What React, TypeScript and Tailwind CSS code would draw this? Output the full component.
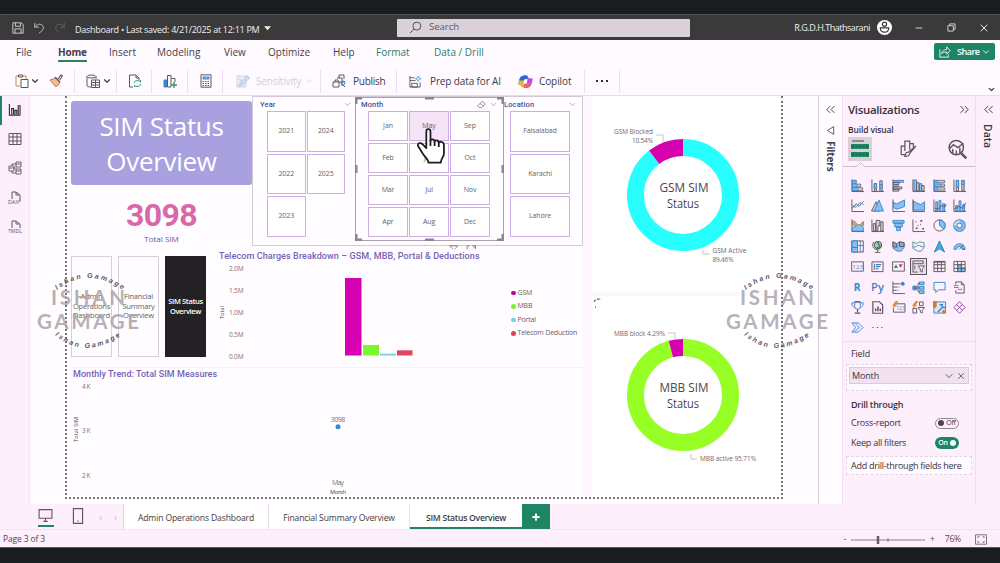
import type { ReactNode } from "react";
import { ChevronDown, ChevronsLeft, ChevronsRight, Minus, Plus, X } from "lucide-react";

const MENU = [
    { label: "File", className: "w-[42px]" },
    { label: "Home", className: "w-[51px]", active: true },
    { label: "Insert", className: "w-[48px]" },
    { label: "Modeling", className: "w-[67px]" },
    { label: "View", className: "w-[44px]" },
    { label: "Optimize", className: "w-[65px]" },
    { label: "Help", className: "w-[43px]" },
    { label: "Format", className: "w-[58px] text-[#2c8063]" },
    { label: "Data / Drill", className: "w-[70px] text-[#2c8063]" },
];

const YEARS = ["2021", "2024", "2022", "2025", "2023"];
const MONTHS = ["Jan", "May", "Sep", "Feb", "Jun", "Oct", "Mar", "Jul", "Nov", "Apr", "Aug", "Dec"];
const LOCATIONS = ["Faisalabad", "Karachi", "Lahore"];

const LEGEND = [
    { label: "GSM", color: "bg-[#b9009b]" },
    { label: "MBB", color: "bg-[#76f52e]" },
    { label: "Portal", color: "bg-[#6fd3e6]" },
    { label: "Telecom Deduction", color: "bg-[#d8405f]" },
];

const K = "#5d5560";
const B = "#3c86c8";
const L = "#86bff0";

// Small glyphs share a 14 x 14 box
function Glyph({ children, className = "size-[14px]" }: { children: ReactNode; className?: string }) {
    return (
        <svg viewBox="0 0 14 14" className={`shrink-0 overflow-visible ${className}`} fill="none" stroke={K} strokeWidth="1">
            {children}
        </svg>
    );
}

const axis = <path d="M1 .5v13h13" />;

const VISUALS: ReactNode[] = [
    // stacked and clustered bars
    <>{axis}<path d="M1.500 1.500h4v3h-4zM1.500 5.500h9v3h-9zM1.500 9.500h11v3h-11z" fill="#d8d0dc" strokeWidth=".8" /><path d="M1.500 1.500h4v3h-4zM1.500 5.500h5v3h-5zM1.500 9.500h6v3h-6z" fill={L} stroke={B} strokeWidth=".8" /></>,
    <>{axis}<path d="M3.500 5h2.500v8H3.500zM9.500 2h2.500v11H9.500z" fill="#d8d0dc" /><path d="M3.500 5h2.500v5H3.500zM9.500 6h2.500v4H9.500z" fill={L} stroke={B} /></>,
    <><path d="M1 .5v13" /><path d="M1.500 1.500h11v2h-11zM1.500 6h5v2h-5z" fill={L} stroke={B} /><path d="M1.500 3.800h6v2h-6zM1.500 8.500h9v2h-9zM1.500 11h6v2h-6z" fill="#d8d0dc" /></>,
    <><path d="M1 .5v13h13" /><path d="M2 1h3v12H2zM8 5h2.500v8H8z" fill={L} stroke={B} /><path d="M5 4h2.500v9H5zM10.500 7H13v6h-2.500z" fill="#d8d0dc" /></>,
    <>{axis}<path d="M1.500 1.500h11v2.500h-11zM1.500 5.500h11V8h-11zM1.500 9.500h11V12h-11z" fill="#d8d0dc" strokeWidth=".8" /><path d="M1.500 1.500h3.500v2.500H1.500zM1.500 5.500h7V8h-7zM1.500 9.500H5V12H1.500z" fill={L} stroke={B} strokeWidth=".8" /></>,
    <>{axis}<path d="M3.500 1.500H6V13H3.500zM9.500 1.500H12V13H9.500z" fill="#d8d0dc" /><path d="M3.500 1.500H6V9H3.500zM9.500 1.500H12V6H9.500z" fill={L} stroke={B} /></>,
    // lines and areas
    <>{axis}<path d="m1.500 10 4-5 3 3 5-5.500" /><path d="m1.500 7 4 2 4-5 4 2" stroke={B} /></>,
    <><path d="m.5 13 5-10 4 10z" fill="#d8d0dc" /><path d="M3.500 13 8.500 1l5 12z" fill={L} stroke={B} /></>,
    <>{axis}<path d="m1.500 3 3 2.500 4-2L13.500 1v7l-5 2-4 1-3-2z" fill={L} stroke={B} /></>,
    <><path d="M1.500 2v10h12V3l-4 3-5-2-3-2" fill={L} stroke={B} />{axis}</>,
    <>{axis}<path d="M3 3h2v10H3zM6.500 1.500h2V13h-2zM10.500 5h2v8h-2z" fill={L} stroke={B} /><path d="m2 10 4 1 3-4 4 1.500 1-3" /></>,
    <>{axis}<path d="M3 7h2v6H3zM6.500 2h2v11h-2zM10.500 6h2v7h-2z" fill={L} stroke={B} /><path d="m1 11 5-3 4 2 4-6" /></>,
    // ribbon, waterfall, funnel, scatter, pie, donut
    <>{axis}<path d="M1.500 2c5 0 4 5 7 5s2-4 5-4v4c-3 0-3 4-6 4s-3-5-6-5z" fill="#e5a15a" stroke="#8a6e5c" strokeWidth=".8" /><path d="M1.500 9c4 0 4-3 7-3s3 3 5 3v4h-12z" fill={L} stroke={B} strokeWidth=".8" /></>,
    <>{axis}<path d="M2.500 5H5v8H2.500zM10.500 3H13v10h-2.500z" fill="#d8d0dc" /><path d="M5.500 1.500h4v6h-2V13h-2z" fill="#d8d0dc" /></>,
    <path d="M1 1.500h12v3H1zM3 4.500h8v4H3zM5 8.500h4v4H5z" fill={L} stroke={B} />,
    <>{axis}<path d="M4 3h.8M9 2h2M6 7h.8M4 10h2M9 6h.8M11 10.500h2" strokeWidth="1.700" /></>,
    <><circle cx="7" cy="7" r="6" /><path d="M7 1v6l5 4A6.300 6.300 0 0 0 7 1z" fill={L} stroke={B} /></>,
    <><circle cx="7" cy="7" r="4.500" stroke={B} strokeWidth="4.500" /><circle cx="7" cy="7" r="4.500" stroke={L} strokeWidth="2.800" /><path d="M2.500 7A4.500 4.500 0 0 1 7 2.500" stroke="#ddd" strokeWidth="2.500" /></>,
    // treemap, maps, arrow, gauge
    <><path d="M.8 1h12.400v12H.8z" /><path d="M1 1h6v7H1zM1 8h6v5H1z" fill={L} stroke={B} /><path d="M7 6h6M10 6v7M10 1v5" stroke={B} /></>,
    <><circle cx="7.500" cy="5.500" r="4" fill="#a5cfae" stroke="#4a4550" /><path d="M6 2.500c3 0 1 2 3 3s-1 3-3 3" stroke="#2f8a5a" strokeWidth="1.500" /><path d="M3 2c-3 5 0 9 6 8.500M7 11v2M4 13.300h6" /></>,
    <><path d="m1 2 4 2 3-2 5 1v5l-3 4H6L1 9z" fill={L} stroke={B} /><path d="m1 2 4 2v4L1 7zM8 2l5 1v4H8z" fill="#aaa2ae" /></>,
    <><path d="m1 2 4 2 3-2 5 1v5l-3 4H6L1 9z" stroke="#4a9a8a" /><path d="M1 7c4 2 4-2 7-1s3 2 5 1" stroke={B} /></>,
    <path d="m7 1 5.500 12L7 9.500 1.500 13z" fill="#47a9dc" stroke="#2782b5" />,
    <><path d="M1 10a6 6 0 0 1 12 0h-3a3 3 0 0 0-6 0z" fill={L} stroke={B} /><path d="m7 10 4-5M10 10h3" /></>,
    // cards, kpi, slicer, tables
    <><path d="M.7 2h12.600v10H.7z" /><text x="1.700" y="9.300" fontSize="6.500" fill={B} stroke="none">123</text></>,
    <><path d="M1 2h12v10.500H1z" /><path d="M3.500 4v6.500" /><path d="M5 5h6M5 7.200h5M5 9.500h3" stroke={B} strokeWidth="1.300" /></>,
    <><path d="M.7 2h12.600v10H.7z" /><path d="m2 8.500 2.300-4 2.300 4z" fill="#2f9a68" stroke="none" /><path d="m7 4.500 2.300 4 2.300-4z" fill="#d43d5c" stroke="none" /></>,
    <><path d="M1 1h11v3H1zM1 4v9h5M3 6v4" /><path d="M6.500 6.500h7l-2.500 3v3.500l-2-1V9.500z" fill="#fff" /></>,
    <><path d="M1 1.500h12v11H1zM1 5h12M1 9h12M5 1.500v11M9 1.500v11" /><path d="M1 2h12" strokeWidth="1.500" /></>,
    <><path d="M5 5h4v7.500H5zM9 8.500h4v4H9z" fill={L} stroke={B} /><path d="M1 1.500h12v11H1zM1 5h12M1 9h12M5 1.500v11M9 1.500v11" /></>,
    // scripts, key influencers, decomposition tree, Q&A, narrative
    <text x="3" y="11" fontSize="11" fontWeight="700" fill={B} stroke="none">R</text>,
    <text x="0" y="10.500" fontSize="12" fontWeight="600" fill={B} stroke="none" textLength="14">Py</text>,
    <>{axis}<path d="M1 3h8M1 6.500h5M1 10h4M7 6.500h1M6 10h1" /><circle cx="11.500" cy="3" r="1.700" fill={B} stroke={B} /></>,
    <><path d="M1 5.500h4v4H1z" fill={B} stroke={B} /><path d="M8 1h5v3H8zM8 5.800h5v3H8zM8 10.500h5v3H8z" fill={L} stroke={B} /><path d="M5 7.500h3M6.500 2.500v9H8M6.500 2.500H8" /></>,
    <path d="M1 1.500h12v8H6l-3 3v-3H1z" stroke={B} />,
    <><path d="M3 4V1h6l3 3v9H3v-3M9 1v3h3" /><path d="M1 5h5M1 7h5M5 9h5" stroke={B} /></>,
    // goals, paginated, automate, others
    <><path d="M4 1h6v5a3 3 0 0 1-6 0zM4 2H1c0 4 1 4 3 5M10 2h3c0 4-1 4-3 5" stroke={B} /><path d="M4 1h6M7 9v3M4 13h6" strokeWidth="1.300" /></>,
    <><path d="M2 .8h7L12.500 4v9.200H2z" strokeWidth="1.300" /><path d="M5 11V8M7.500 11V6M10 11V8" strokeWidth="1.600" /></>,
    <><path d="M3 3h11v9H1.500V8" /><text x="4.500" y="9.800" fontSize="5.500" fill={B} stroke="none">123</text><path d="M4 0 0 5h2l-2 4 6-5H4l3-4z" fill="#e58a35" stroke="none" /></>,
    <><path d="M8 1h4v4H8zM1 8h4v5H1z" /><path d="M6.500 7h7l-2.500 3v3l-2-1v-2z" fill="#fff" /><path d="M4 0 0 5h2l-2 4 6-5H4l3-4z" fill="#e58a35" stroke="none" /></>,
    <><path d="M1 1h12.500v12H1z" fill="#d8e8f6" stroke={B} /><path d="M7 4h3v3L5 12M10 7h3" stroke={B} strokeWidth="1.500" /><path d="M0 0h4v6L2 8 0 6z" fill="#d9792b" stroke="none" /><circle cx="11.500" cy="11.500" r="1.800" fill="#d9792b" stroke="none" /></>,
    <><path d="m7 .7 6 6.300-6 6.300L1 7z" stroke="#8d4c9e" /><path d="m4 3.800 6 6.300M10 3.800 4 10.100" stroke="#8d4c9e" /></>,
    <><path d="M1 2h7l5 5-5 5H1l4-5z" stroke={B} /><path d="m4 2 5 5-6 5" stroke={L} strokeWidth="1.500" /></>,
    <path d="M1.500 7h1.300M6.300 7h1.300M11 7h1.300" strokeWidth="1.300" />,
];

function TitleBar() {
    return (
        <div className="h-[26px] bg-[#3b3a3b] border-t border-[#55535a] flex items-center text-[#f1eef1] shrink-0">
            <div className="w-[75px] pl-[12px] flex items-center gap-[9px]">
                <Glyph className="size-[12px]">
                    <path d="M1 1h10l2 2v10H1zM4 1v4h6V1M3.500 13V8h7v5" stroke="#ddd" />
                </Glyph>
                <Glyph className="size-[12px]">
                    <path d="M2 1v5h5M2 6c4-6 11-3 10 1 0 2-2 4-5 6" stroke="#ccc" />
                </Glyph>
                <Glyph className="size-[12px]">
                    <path d="M12 1v5H7M12 6C8 0 1 3 2 7c0 2 2 4 4 5" stroke="#666468" />
                </Glyph>
            </div>
            <div className="w-[322px] flex items-center gap-[5px] text-[9px] font-medium tracking-[-0.29px] whitespace-nowrap pt-[5px]">
                Dashboard • Last saved: 4/21/2025 at 12:11 PM
                <svg viewBox="0 0 6 4" className="w-[7px] h-[5px] mb-1"><path d="M0 0h6L3 3.500z" fill="#eee" /></svg>
            </div>
            <div className="w-[293px] h-[18px] bg-[#dbd1db] flex items-center rounded-[1px] text-[#4e6163] text-[9.500px]">
                <svg viewBox="0 0 14 14" className="size-[13px] ml-3 mr-[7px]" fill="none" stroke="#4c474f">
                    <circle cx="8.500" cy="5.500" r="4.300" /><path d="M5.500 8.700 1 13" />
                </svg>
                Search
            </div>
            <div className="flex-1 flex items-center justify-end">
                <span className="text-[9px] tracking-[-0.47px] mr-[7px]">R.G.D.H.Thathsarani</span>
                <svg viewBox="0 0 16 16" className="size-[15px]" fill="none" stroke="#3b3a3b" strokeWidth="1.300">
                    <circle cx="8" cy="8" r="8" fill="#fff" stroke="none" />
                    <circle cx="8" cy="4.500" r="2.200" /><path d="M3.500 8.500h9c0 6-9 6-9 0z" />
                </svg>
                <Minus className="size-[10px] ml-[22px]" strokeWidth={2} />
                <svg viewBox="0 0 10 10" className="size-[9px] ml-[23px]" fill="none" stroke="#ddd"><path d="M1 3h6v6H1zM3 3V1h6v6H7" /></svg>
                <X className="size-[12px] ml-[22px] mr-[10px]" strokeWidth={2} />
            </div>
        </div>
    );
}

function MenuBar() {
    return (
        <div className="h-[24px] bg-[#fffaff] flex items-start pl-[16px] text-[10px] text-[#45404a] shrink-0">
            {MENU.map((item) => (
                <div key={item.label} className={`${item.className} whitespace-nowrap shrink-0`}>
                    <span className={`inline-block h-[22px] pt-[4px] leading-[16px] ${item.active ? "font-bold tracking-[-0.2px] border-b-2 border-[#2c8063]" : ""}`}>
                        {item.label}
                    </span>
                </div>
            ))}
            <button className="ml-auto mr-[5px] mt-[3px] w-[61px] h-[17px] bg-[#1e8565] text-white rounded-[2px] flex items-center text-[9px] font-semibold tracking-[-0.5px]">
                <Glyph className="size-[12px] ml-[5px] mr-[6px]">
                    <path d="M1 4v9h10v-3M3 9c1-4 4-5 6-5V1l4 4.500-4 4V7C6 7 5 7 3 9z" stroke="#fff" />
                </Glyph>
                Share
                <ChevronDown className="size-[10px] ml-[2px]" />
            </button>
        </div>
    );
}

function Group({ className, children }: { className: string; children: ReactNode }) {
    return <div className={`h-[23px] flex items-center shrink-0 border-r border-[#f0dcf0] whitespace-nowrap ${className}`}>{children}</div>;
}

function Ribbon() {
    return (
        <div className="h-[32px] bg-[#fffaff] border-b border-[#eadbe9] flex items-center pl-[15px] pt-[3px] text-[10px] text-[#3f3a43] shrink-0">
            <Group className="w-[60px]">
                <Glyph>
                    <path d="M5 12H1V2h2M8 2h3v3" stroke="#c08e50" /><path d="M3.500 1h4v2h-4z" /><path d="M6 5.500h7v8H6z" fill="#fff" />
                </Glyph>
                <ChevronDown className="size-[10px] ml-px mr-[9px]" strokeWidth={2.600} />
                <Glyph>
                    <path d="m1 6 6-2 4 5-4 4z" fill="#efbd91" stroke="#bf7e58" /><path d="m6 3 5 5M9 5l3-4 1.300 1-2.600 4" fill="#fff" strokeWidth="1.200" />
                </Glyph>
            </Group>
            <Group className="w-[42px] pl-[11px]">
                <Glyph>
                    <ellipse cx="5.500" cy="2.500" rx="4.500" ry="1.500" /><path d="M1 2.500v9c0 1 2 1.500 4 1.500M10 2.500V5" /><path d="M5.500 6h8v7.500h-8zM5.500 8.500h8M5.500 11h8M9.500 6v7" fill="#fff" />
                </Glyph>
                <ChevronDown className="size-[10px] ml-[2px]" strokeWidth={2.600} />
            </Group>
            <Group className="w-[35px] pl-[11px]">
                <Glyph><path d="M5 13H1.500V1H8l3 3v2M8 1v3h3" /><path d="M6 9c1-3 5-3 6.500-1V6M13 10c-1 3-5 3-6.500 1.500V13" stroke="#2f9a68" /></Glyph>
            </Group>
            <Group className="w-[36px] pl-[11px]">
                <Glyph><path d="M1 6h3v7H1z" fill={B} stroke={B} /><path d="M4.500 1.500h3.500V13H4.500zM8.500 4.500H12V8" /><path d="M11 8v6M8 11h6" stroke="#2f9a68" strokeWidth="1.400" /></Glyph>
            </Group>
            <Group className="w-[35px] pl-[11px]">
                <Glyph><path d="M2 .8h10v12.400H2z" /><path d="M4 3h6v2H4z" fill={L} stroke={B} /><path d="M3.500 7.500h7M3.500 9.500h7M3.500 11.500h7" strokeDasharray="1.500 1" /></Glyph>
            </Group>
            <Group className="w-[98px] pl-[13px] text-[#d3ccd5]">
                <Glyph><path d="M1 2h9v11H1z" stroke="#d8d3dc" fill="#e9edf7" /><path d="m4 10 7-8 2 2-7 7-3 1zM3 5l3 2" stroke="#b9d0e9" strokeWidth="1.500" /></Glyph>
                <span className="ml-[6px] tracking-[-0.15px]">Sensitivity</span>
                <ChevronDown className="size-[10px] ml-[3px]" />
            </Group>
            <Group className="w-[76px] pl-[11px]">
                <Glyph><path d="M5 4h5v8M1 8h6v5H1zM3 8V6h3v2M7 8h6M11 11l2 2" /><path d="M7 4V1h5v4" /><circle cx="11" cy="9" r="2" stroke={B} /></Glyph>
                <span className="ml-[7px] tracking-[-0.25px]">Publish</span>
            </Group>
            <Group className="w-[188px] pl-[12px]">
                <Glyph className="size-[13px]"><path d="M1 3h5M1 1v12h11V8M1 6h6M3 9h6v4H3z" /><path d="m10 1 1 2 2 1-2 1-1 2-1-2-2-1 2-1z" stroke={B} fill="#d8eaf8" strokeWidth=".7" /></Glyph>
                <span className="ml-[8px] w-[88px] tracking-[-0.13px]">Prep data for AI</span>
                <svg viewBox="0 0 14 14" className="size-[15px] shrink-0">
                    <path d="M4 2h5L6.500 10H2c-2 0-2-1-1-4 1-3 1-4 3-4z" fill="#36a9dc" />
                    <path d="M4 2c1-1 4-1 5 0l1 2-3 1-1 4-3-2-2-1c1-3 2-4 3-4z" fill="#2867d8" />
                    <path d="M1 6h5l-1 6c-2 1-2-1-3-2-2 0-2-1-1-4z" fill="#e9b43a" />
                    <path d="M8 4h4c2 0 2 1 1 4-1 3-1 4-3 4H5l1-3z" fill="#bd4ce0" />
                    <path d="m6 9 6-1c-1 3-1 5-3 5H5z" fill="#f05f6a" />
                    <path d="m6 5-1 4h3l1-4z" fill="#fff" />
                </svg>
                <span className="ml-[6px] tracking-[-0.1px]">Copilot</span>
            </Group>
            <Group className="w-[35px] pl-[10px]">
                <Glyph className="size-[14px]"><path d="M1 7h2M6 7h2M11 7h2" stroke="#302b35" strokeWidth="1.800" /></Glyph>
            </Group>
            <ChevronDown className="size-[9px] ml-auto mr-[4px] mt-4" strokeWidth={3.500} />
        </div>
    );
}

function LeftRail() {
    return (
        <nav className="w-[30px] bg-[#fdeffb] border-r border-[#f5e3f3] relative flex flex-col items-center pt-[7px] gap-[15.500px] shrink-0">
            <span className="absolute left-0 top-0 w-[2px] h-[29px] bg-[#1e8565]" />
            <Glyph className="size-[13px]"><path d="M1.500 1v12h12M4 12V6h2v6M7.500 12V8h2v4M11 12V3h2v9" stroke="#2f2a33" strokeWidth="1.200" /></Glyph>
            <Glyph><path d="M1 1.500h12v11H1zM1 5h12M1 9h12M5 1.500v11M9 1.500v11" /></Glyph>
            <Glyph><path d="M8 1h5v5H8zM8 8h5v5H8zM1 5h5v5H1zM8 3h5M8 10h5M1 7h5M6 7h2M4 5V3h4M4 10v2h4" strokeWidth=".9" /></Glyph>
            <Glyph>
                <path d="M4 8V1h4l4 3v7M8 1v3h3" /><text x="0" y="12.500" fontSize="5" fill={K} stroke="none" textLength="11" lengthAdjust="spacingAndGlyphs">DAX</text>
            </Glyph>
            <Glyph>
                <path d="M4 8V1h4l4 3v4M8 1v3h3" /><text x="0" y="12.500" fontSize="5" fill={K} stroke="none" textLength="14" lengthAdjust="spacingAndGlyphs">TMDL</text>
            </Glyph>
        </nav>
    );
}

function Tile({ children, active }: { children: ReactNode; active?: boolean }) {
    return (
        <div className={`border border-[#cbaee6] flex items-center justify-center text-[7px] text-[#66606b] tracking-[-0.1px] ${active ? "bg-[#f5e3f7]" : "bg-white"}`}>
            {children}
        </div>
    );
}

function SlicerHead({ title, erase, className }: { title: string; erase?: boolean; className: string }) {
    return (
        <div className={`flex items-center text-[#46518f] text-[7.500px] font-medium font-['Roboto'] ${className}`}>
            <span className="flex-1 tracking-[0.15px]">{title}</span>
            {erase && (
                <Glyph className="size-[9px] mr-[3px]"><path d="m1 9 7-7 5 4-6 6H4zM5 5.500l5 4" /></Glyph>
            )}
            <ChevronDown className="size-[9px] text-[#777]" strokeWidth={1.500} />
        </div>
    );
}

function Slicers() {
    return (
        <div className="w-[331px] h-[150px] border border-[#d3c9d6] bg-[#fffdff] flex shrink-0">
            <div className="w-[102px]">
                <SlicerHead title="Year" className="h-[14px] pt-px pl-[7px] pr-[3px]" />
                <div className="ml-[14px] w-[78px] h-[126px] grid grid-cols-2 grid-rows-3 gap-x-px gap-y-[2px]">
                    {YEARS.map((year) => <Tile key={year}>{year}</Tile>)}
                </div>
            </div>
            <div className="w-[149px] h-[144px] border border-[#aaa3ad] relative">
                <SlicerHead title="Month" erase className="h-[13px] pl-[5px] pr-[5px]" />
                <div className="ml-[12px] w-[122px] h-[126px] grid grid-cols-3 grid-rows-4 gap-x-px gap-y-[2px]">
                    {MONTHS.map((month) => (
                        <Tile key={month} active={month === "May"}>
                            {month}
                        </Tile>
                    ))}
                </div>
                {/* resize handles */}
                <svg viewBox="0 0 149 144" className="absolute -left-px -top-px w-[149px] h-[144px]" fill="none" stroke="#8b858e" strokeWidth="3">
                    <path d="M1 7V1h6M142 1h6v6M148 137v6h-6M7 143H1v-6M70 1h9M70 143h9M1 68v8M148 68v8" />
                </svg>
                {/* hand cursor */}
                <svg viewBox="0 0 28 36" className="absolute left-[61px] top-[29px] w-[29px] h-[38px]" fill="#fff" stroke="#1d1b1f" strokeWidth="1.700" strokeLinejoin="round">
                    <path d="M9 20V4c0-3 4-3 4 0v9c0-2 4-2 4 1 0-2 4-2 4 1 1-2 5-1 5 2v8c0 4-3 5-3 9H11c0-3-3-5-5-8l-5-8c-1-3 3-4 5-1z" />
                    <path d="M13 12v6M17 14v4M21 15v4" />
                </svg>
            </div>
            <div className="w-[78px]">
                <SlicerHead title="Location" className="h-[14px] pt-px pr-[5px]" />
                <div className="ml-[6px] w-[60px] h-[126px] grid grid-rows-3 gap-y-[2px]">
                    {LOCATIONS.map((place) => <Tile key={place}>{place}</Tile>)}
                </div>
            </div>
        </div>
    );
}

function TelecomChart() {
    return (
        <section className="w-[366px] h-[116px] pl-[2px] flex flex-col">
            <h3 className="h-[11px] leading-[13px] text-[9px] font-medium font-['Roboto'] text-[#7662b6] tracking-[0.1px] whitespace-nowrap">
                Telecom Charges Breakdown – GSM, MBB, Portal &amp; Deductions
            </h3>
            <div className="flex items-start">
                <svg viewBox="0 0 292 105" className="w-[292px] h-[105px] shrink-0" fontSize="6.500" fill="#77717b">
                    <text transform="translate(5 58) rotate(-90)" textLength="13" fontSize="5.500" fill="#454049">Total</text>
                    <text x="10" y="10" textLength="14.500">2.0M</text>
                    <text x="10" y="32" textLength="14.500">1.5M</text>
                    <text x="10" y="54" textLength="14.500">1.0M</text>
                    <text x="10" y="76" textLength="14.500">0.5M</text>
                    <text x="10" y="98" textLength="14.500">0.0M</text>
                    <path d="M126 17h16.500v77.500H126z" fill="#d400b2" />
                    <path d="M144 84h16v10.500h-16z" fill="#79f92d" />
                    <path d="M161 92.700h16v1.800h-16z" fill="#77cfe4" />
                    <path d="M178 89.300h15.500v5.200H178z" fill="#e3435e" />
                </svg>
                <ul className="mt-[25px] text-[7px] text-[#66606b]">
                    {LEGEND.map((item) => (
                        <li key={item.label} className="h-[13.500px] flex items-center gap-[2px] whitespace-nowrap tracking-[-0.2px]">
                            <i className={`size-[4.500px] rounded-full ${item.color}`} />
                            {item.label}
                        </li>
                    ))}
                </ul>
            </div>
        </section>
    );
}

function TrendChart() {
    return (
        <section className="h-[128px] border-t border-[#f8eef8]">
            <h3 className="h-[12px] leading-[12px] pl-[2px] text-[9px] font-medium font-['Roboto'] text-[#7662b6] tracking-[0.05px]">
                Monthly Trend: Total SIM Measures
            </h3>
            <svg viewBox="0 0 512 115" className="w-[512px] h-[115px]" fontSize="6.500" fill="#77717b">
                <text transform="translate(6.500 62) rotate(-90)" textLength="25" fontSize="5.500" fill="#454049">Total SIM</text>
                <text x="11" y="8.500" textLength="8.500">4K</text>
                <text x="11" y="53" textLength="8.500">3K</text>
                <text x="11" y="97.500" textLength="8.500">2K</text>
                <text x="267" y="41.500" textLength="14.500" textAnchor="middle" fontSize="7">3098</text>
                <circle cx="267" cy="46.700" r="2.500" fill="#3989d8" />
                <text x="267" y="104.500" textAnchor="middle" fontSize="7" textLength="12">May</text>
                <text x="267" y="114" textAnchor="middle" fontSize="5.500" fill="#454049" textLength="16">Month</text>
            </svg>
        </section>
    );
}

function Donut({ name, share, color, children }: { name: string; share: number; color: string; children: ReactNode }) {
    // ring is drawn clockwise from the top, the small slice closes it
    const length = 2 * Math.PI * 47.5;
    return (
        <svg viewBox="0 0 187 196" className="w-[187px] h-[196px]" fill="#6e6872" fontSize="6.500">
            <g transform="translate(92 99) rotate(-90)" fill="none" strokeWidth="17">
                <circle r="47.500" stroke={color} strokeDasharray={`${length * share} ${length}`} />
                <circle r="47.500" stroke="#d600ae" strokeDasharray={`${length * (1 - share)} ${length}`} strokeDashoffset={-length * share} />
            </g>
            <text x="93" y="96" textAnchor="middle" fontSize="12" fill="#4b464f" textLength="49" lengthAdjust="spacingAndGlyphs">{name}</text>
            <text x="92" y="112" textAnchor="middle" fontSize="12" fill="#4b464f" textLength="32" lengthAdjust="spacingAndGlyphs">Status</text>
            {children}
        </svg>
    );
}

function Report() {
    return (
        <main className="w-[788px] bg-[#fffdff] pl-[35px] shrink-0">
            <div className="w-[718px] h-[403px] border-x-2 border-b-2 border-dotted border-[#77707a] pl-[4px] flex">
                <div className="w-[512px] flex flex-col">
                    <div className="h-[154px] flex">
                        <div className="w-[182px] pt-[5px]">
                            <h1 className="h-[84px] rounded-[3px] bg-[#a9a0df] text-white text-[26px] leading-[35px] tracking-[-0.3px] text-center pt-[8px]">
                                SIM Status
                                <br />
                                Overview
                            </h1>
                            <div className="h-[62px] text-center pt-[13px]">
                                <div className="text-[32px] leading-[34px] font-bold font-['Roboto'] text-[#d868a9] tracking-[-0.6px]">3098</div>
                                <div className="text-[8px] leading-[13px] text-[#6654a3]">Total SIM</div>
                            </div>
                        </div>
                        <Slicers />
                    </div>
                    <div className="h-[117px] flex relative">
                        <svg viewBox="0 0 34 6" className="absolute left-[375px] -top-[5px] w-[34px] h-[5px]" fill="none" stroke="#77717b">
                            <path d="M1 1h10M1 1l4 4M11 1 7 5M22 5V1h3M28 1h4v4M29 4l3-3" />
                        </svg>
                        <div className="w-[146px] pt-[6px] flex gap-[6px] text-center text-[7.500px] leading-[9.700px] tracking-[-0.2px] text-[#625d66]">
                            <div className="w-[41px] h-[101px] border border-[#d8cede] flex items-center justify-center">Admin Operations Dashboard</div>
                            <div className="w-[41px] h-[101px] border border-[#d8cede] flex items-center justify-center">Financial Summary Overview</div>
                            <div className="w-[41px] h-[101px] bg-[#242124] text-white font-semibold flex items-center justify-center tracking-[-0.35px]">SIM Status Overview</div>
                        </div>
                        <TelecomChart />
                    </div>
                    <TrendChart />
                </div>
                <div className="w-[7px] bg-[#fef8fe]" />
                <div className="w-[187px] bg-white border-l border-[#fbf0fb]">
                    <Donut name="GSM SIM" share={0.8946} color="#29feff">
                        <text x="62" y="38" textAnchor="end" textLength="39">GSM Blocked</text>
                        <text x="62" y="46.500" textAnchor="end" textLength="21">10.54%</text>
                        <text x="121.500" y="157" textLength="34">GSM Active</text>
                        <text x="121.500" y="165.500" textLength="21">89.46%</text>
                        <path d="M65 39h7v7M112 154v4h7" fill="none" stroke="#c6c0c9" />
                    </Donut>
                    <div className="border-t-4 border-[#fef7fe]">
                        <Donut name="MBB SIM" share={0.9571} color="#97fe26">
                            <text x="23" y="39.500" textLength="51">MBB block 4.29%</text>
                            <text x="109" y="165" textLength="56">MBB active 95.71%</text>
                            <path d="M77 37h7v6M100 158v5h6" fill="none" stroke="#c6c0c9" />
                            <path d="M3 6c1-3 4-3 7-3M4 11h1" fill="none" stroke="#77717b" strokeWidth="1.300" strokeDasharray="3 1" />
                        </Donut>
                    </div>
                </div>
            </div>
        </main>
    );
}

function Visualizations() {
    return (
        <aside className="w-[133px] bg-[#fdeffb] border-l border-[#f3dff1] shrink-0 text-[#38333c]">
            <div className="h-[27px] pl-[5px] pr-[3px] flex items-center justify-between text-[11.500px] font-semibold tracking-[-0.35px]">
                Visualizations
                <ChevronsRight className="size-[15px]" strokeWidth={1.500} />
            </div>
            <div className="pl-[5px] h-[14px] leading-[13px] text-[8.500px] font-semibold tracking-[-0.12px]">Build visual</div>
            <div className="h-[30px] flex items-start pl-[5px] border-b border-[#cbbfcb]">
                <div className="size-[24px] bg-[#d9cfd8] flex items-center justify-center">
                    <svg viewBox="0 0 18 18" className="size-[18px]">
                        <path d="M1 1h12" stroke="#49434c" /><path d="M0 4h18v5H0zM0 12h18v5H0z" fill="#1e8565" />
                        <path d="M1 6.500h16M1 14.500h16" stroke="#145b44" strokeDasharray="2 1.500" />
                    </svg>
                </div>
                <Glyph className="size-[17px] ml-[28px] mt-[3px]"><path d="M1 12V5h3v4M4 8V1h4v7M8 3h3v3M1 12h4" /><path d="m13 5-5 6-1 2-3 .5 1-3 2-.5 6-5z" fill="#fff" /></Glyph>
                <Glyph className="size-[20px] ml-[30px] mt-[2px]"><circle cx="6.500" cy="6" r="5" /><path d="m1.500 7 3-3 3 2 4-3M4 10V7M6.500 11V8M9 10V6" /><path d="m10 10 3.500 3.500" strokeWidth="1.800" /></Glyph>
            </div>
            <div className="h-[175px] border-b border-[#eddded] pt-[8px] relative">
                <svg viewBox="0 0 10 6" className="absolute left-[12px] -top-[5px] w-[11px] h-[6px]"><path d="m0 5.500 5-5 5 5" fill="#fdeffb" stroke="#cbbfcb" /></svg>
                <div className="ml-[4px] w-[123px] grid grid-cols-6">
                    {VISUALS.map((icon, i) => (
                        <div key={i} className="h-[20.400px] flex items-center justify-center">
                            <span className={i === 27 ? "border border-[#5d5560] p-px bg-[#e9dde8]" : ""}>
                                <Glyph className="size-[13px]">{icon}</Glyph>
                            </span>
                        </div>
                    ))}
                </div>
            </div>
            <div className="text-[9px] tracking-[-0.15px] leading-[12px]">
                <div className="pl-[8px] pt-[6px] h-[22px]">Field</div>
                <div className="mx-[3px] h-[27px] border border-dashed border-[#e5d3e4] bg-[#fff8ff] p-[2px]">
                    <div className="h-[17px] border border-[#d9ccd9] bg-[#f2e2f0] pl-[2px] pr-[2px] flex items-center">
                        <span className="flex-1">Month</span>
                        <ChevronDown className="size-[12px]" strokeWidth={1.500} />
                        <X className="size-[10px] ml-px" strokeWidth={1.700} />
                    </div>
                </div>
                <div className="pl-[8px] h-[22px] pt-[8px] font-semibold tracking-[-0.25px]">Drill through</div>
                <div className="pl-[8px] pr-[16px] h-[20px] flex items-center justify-between tracking-[-0.25px]">
                    Cross-report
                    <span className="w-[24px] h-[11px] rounded-full border border-[#8f8791] flex items-center justify-center gap-[2px] text-[7px]">
                        <i className="size-[6px] rounded-full bg-[#4b454e]" />
                        Off
                    </span>
                </div>
                <div className="pl-[8px] pr-[16px] h-[20px] flex items-center justify-between tracking-[-0.25px]">
                    Keep all filters
                    <span className="w-[24px] h-[12px] rounded-full bg-[#1e8565] text-white flex items-center justify-center gap-[2px] text-[7px] font-semibold">
                        On
                        <i className="size-[6px] rounded-full bg-white" />
                    </span>
                </div>
                <div className="mx-[3px] mt-[3px] h-[19px] border border-dashed border-[#e5d3e4] bg-[#fffaff] pl-[4px] leading-[18px] whitespace-nowrap tracking-[-0.26px]">
                    Add drill-through fields here
                </div>
            </div>
        </aside>
    );
}

function Watermark({ className, id }: { className: string; id: string }) {
    return (
        <svg viewBox="0 0 104 84" className={`absolute w-[104px] h-[84px] pointer-events-none ${className}`} fontFamily="Liberation Sans">
            <path id={`${id}-top`} d="M21 21Q52 -4 90 23" fill="none" />
            <path id={`${id}-bottom`} d="M19 66Q50 93 90 63" fill="none" />
            <g fill="#5c565f" fontSize="7" fontStyle="italic" fontWeight="700" letterSpacing="2.100">
                <text><textPath href={`#${id}-top`}>Ishan Gamage</textPath></text>
                <text><textPath href={`#${id}-bottom`}>Ishan Gamage</textPath></text>
            </g>
            <g fill="#aaa4aa" fillOpacity=".85" fontFamily="Lato" fontWeight="700" fontSize="20.500">
                <text x="15" y="36" textLength="74">ISHAN</text>
                <text x="1" y="60" textLength="102">GAMAGE</text>
            </g>
        </svg>
    );
}

function PageTabs() {
    return (
        <div className="h-[26px] bg-[#fdeffb] border-b border-[#f3e3f2] flex pl-[30px] text-[8.600px] tracking-[-0.14px] text-[#3f3a43] shrink-0 whitespace-nowrap">
            <div className="w-[94px] flex items-start pt-[4px] pl-[8px] border-r border-[#e0cfe0]">
                <div className="h-[19px] w-[16px] border-b-2 border-[#1e8565]">
                    <Glyph className="size-[15px]"><path d="M1 1.500h12v8H1zM5 12.500h4M7 9.500v3" /></Glyph>
                </div>
                <Glyph className="size-[16px] ml-[16px]"><path d="M3 .5h8v13H3zM6.500 11.500h1" /></Glyph>
                <span className="ml-[13px] text-[#cfbfd0] leading-[18px] text-[10px]">‹</span>
                <span className="ml-[12px] text-[#cfbfd0] leading-[18px] text-[10px]">›</span>
            </div>
            <div className="w-[145px] bg-white border-r border-[#eadcea] pt-[3px] flex items-center justify-center">Admin Operations Dashboard</div>
            <div className="w-[141px] bg-white border-r border-[#eadcea] pt-[3px] flex items-center justify-center">Financial Summary Overview</div>
            <div className="w-[112px] bg-white border-b-2 border-[#1e8565] pt-[5px] flex items-center justify-center font-semibold tracking-[-0.25px]">SIM Status Overview</div>
            <div className="w-[28px] bg-[#1e8565] text-white flex items-center justify-center">
                <Plus className="size-[10px]" strokeWidth={4.500} />
            </div>
        </div>
    );
}

export default function App() {
    return (
        <div className="w-[1000px] h-[563px] bg-[#191d20] flex flex-col pt-[14px] overflow-hidden font-['Open_Sans',sans-serif]">
            <TitleBar />
            <MenuBar />
            <Ribbon />
            <div className="h-[408px] flex relative bg-[#fdeffb] shrink-0">
                <LeftRail />
                <Report />
                <aside className="w-[24px] bg-[#fffdff] border-l border-[#d5ccd6] flex flex-col items-center pt-[6px] text-[#443e47] shrink-0">
                    <ChevronsLeft className="size-[15px]" strokeWidth={1.500} />
                    <Glyph className="size-[9px] mt-[9px]"><path d="m2 7 10-6v12z" strokeWidth="1.500" /></Glyph>
                    <span className="mt-[6px] text-[10px] leading-[12px] font-bold tracking-[-0.1px] [writing-mode:vertical-rl]">Filters</span>
                </aside>
                <Visualizations />
                <aside className="w-[25px] border-l border-[#f0dcee] flex flex-col items-center pt-[6px] text-[#38333c] shrink-0">
                    <ChevronsLeft className="size-[15px]" strokeWidth={1.500} />
                    <span className="mt-[7px] text-[10.500px] leading-[12px] font-semibold [writing-mode:vertical-rl]">Data</span>
                </aside>
                <Watermark id="left" className="left-[36px] top-[173px]" />
                <Watermark id="right" className="left-[725px] top-[173px]" />
            </div>
            <PageTabs />
            <div className="h-[17px] bg-[#fdeffb] flex items-center text-[8.500px] tracking-[-0.15px] text-[#4f4953] shrink-0 pl-[3px] pt-[2px]">
                Page 3 of 3
                <div className="ml-auto flex items-center pr-[13px]">
                    <span>-</span>
                    <svg viewBox="0 0 74 10" className="w-[74px] h-[10px] mx-[5px]" stroke="#665f69" fill="none">
                        <path d="M0 5h74M37 3v4" strokeWidth=".8" /><path d="M27 1v8" strokeWidth="2.500" />
                    </svg>
                    <span>+</span>
                    <span className="ml-[10px]">76%</span>
                    <Glyph className="w-[12px] h-[11px] ml-[14px]"><path d="M0 1h14v12H0z" /><path d="M3 5V3.500h2M9 3.500h2V5M11 9v1.500H9M5 10.500H3V9" /></Glyph>
                </div>
            </div>
            <div className="h-px bg-[#59506a] shrink-0" />
        </div>
    );
}
